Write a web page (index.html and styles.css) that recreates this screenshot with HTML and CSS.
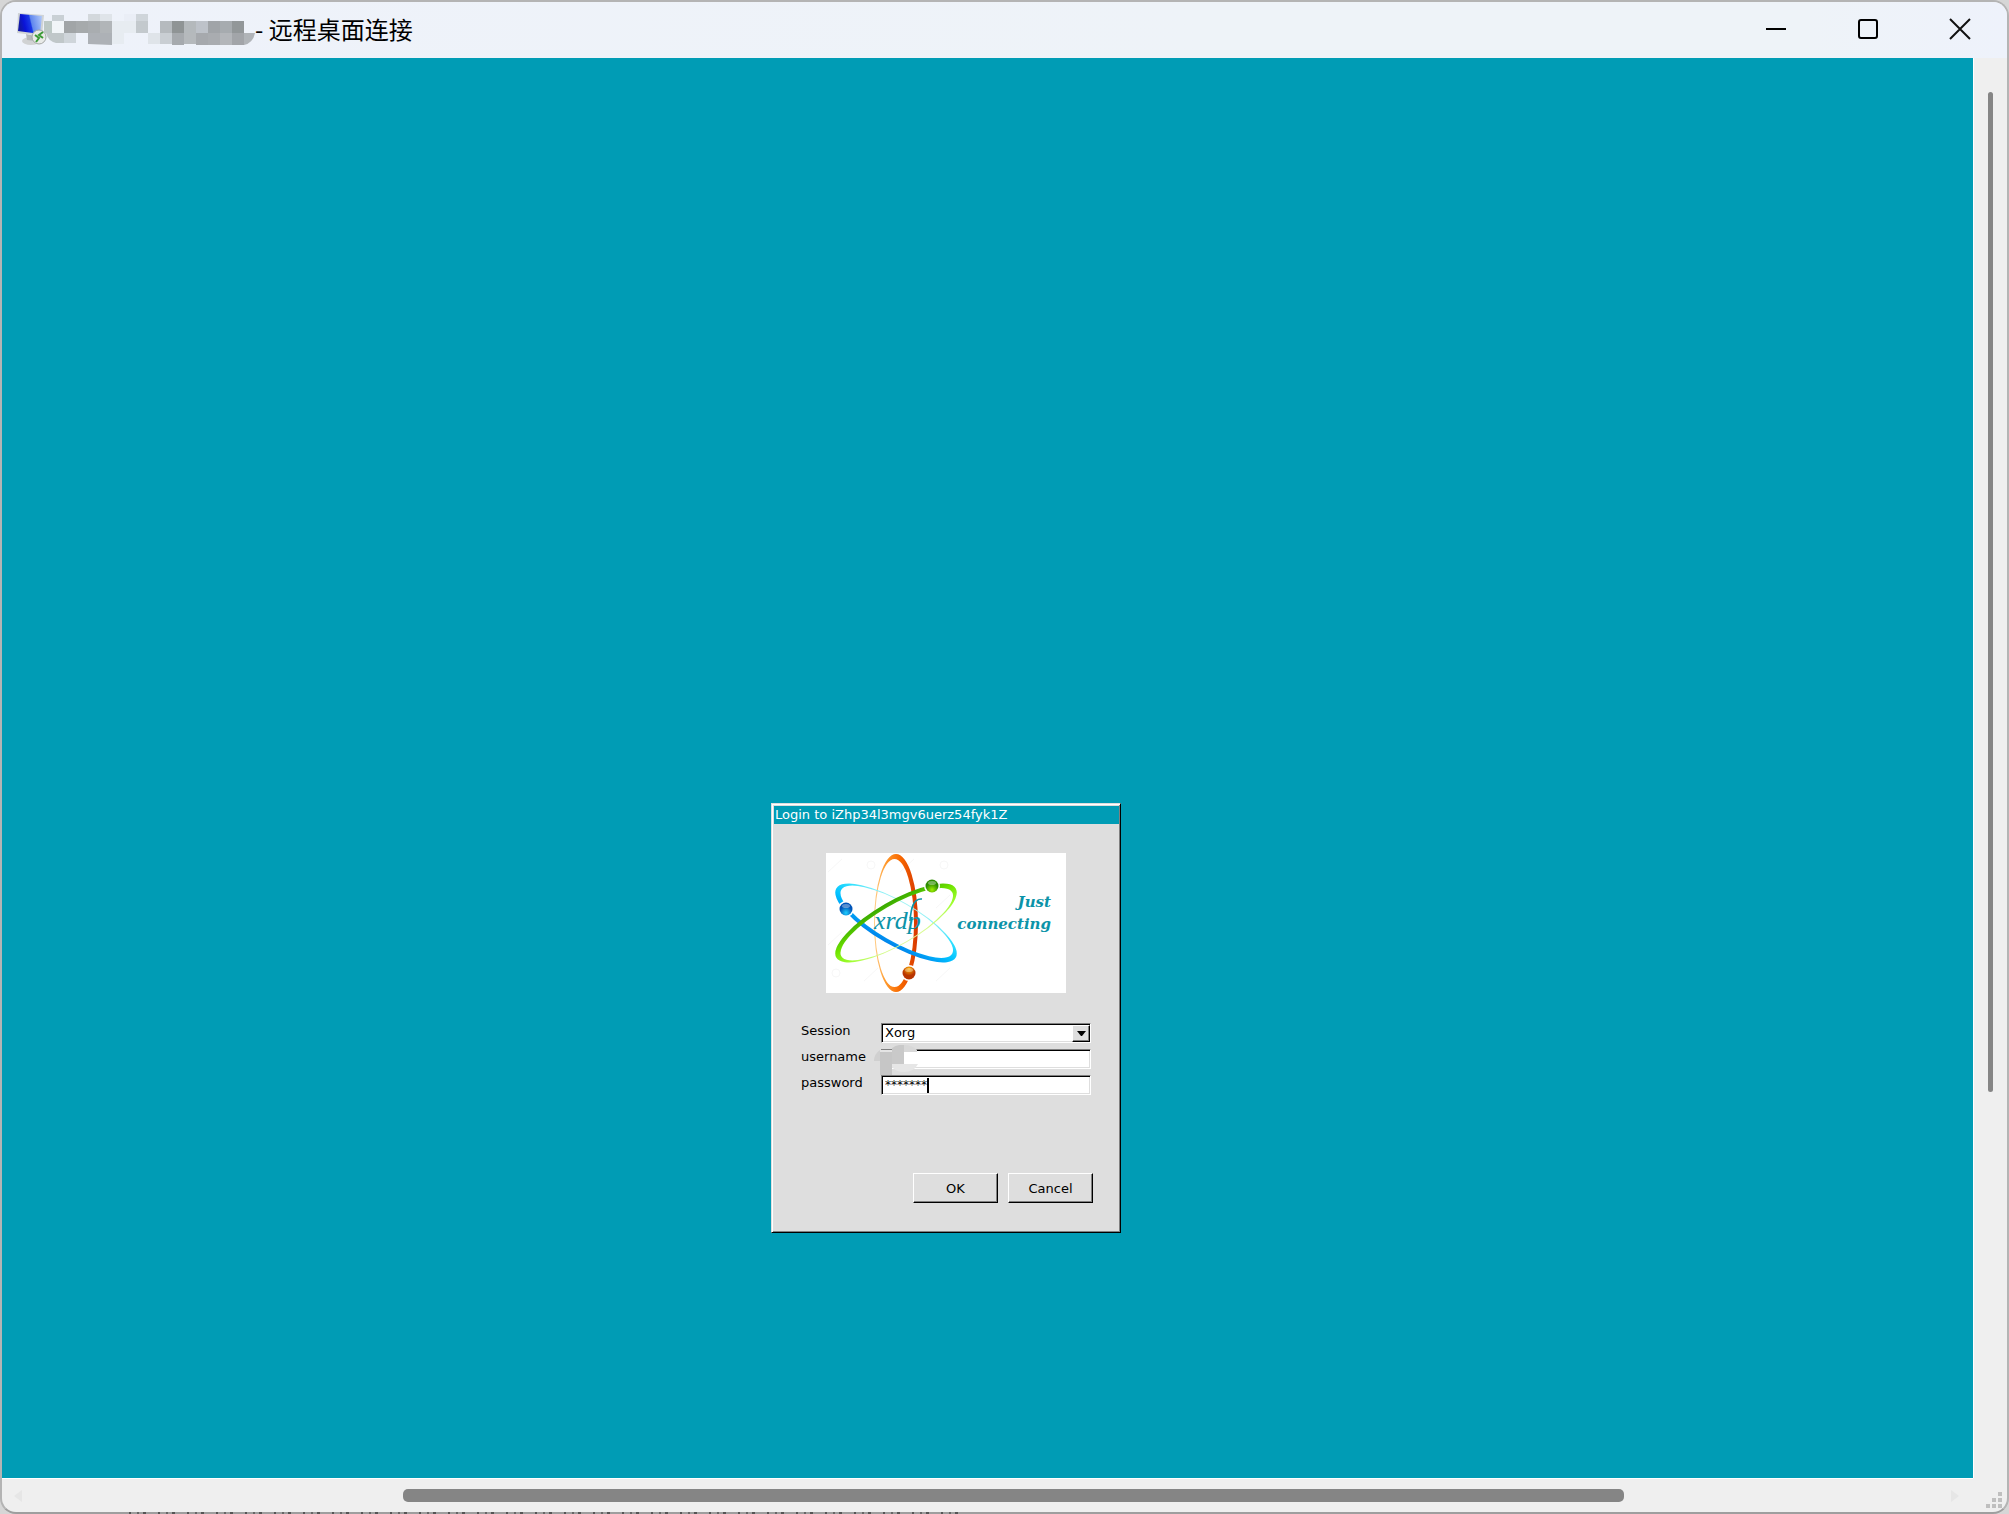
FILE: index.html
```html
<!DOCTYPE html>
<html lang="zh-CN">
<head>
<meta charset="utf-8">
<title>远程桌面连接</title>
<link rel="stylesheet" href="styles.css">
</head>
<body>
<div class="window">
  <header class="titlebar">
    <svg class="app-icon" width="32" height="32" viewBox="0 0 32 32" aria-hidden="true">
      <defs>
        <linearGradient id="screen" x1="0" y1="0.2" x2="1" y2="0">
          <stop offset="0" stop-color="#1018a8"/><stop offset="0.2" stop-color="#0a14d8"/><stop offset="0.45" stop-color="#1a3ae8"/><stop offset="0.5" stop-color="#5f86ee"/><stop offset="1" stop-color="#b4ccfa"/>
        </linearGradient>
      </defs>
      <ellipse cx="15" cy="28" rx="9" ry="4" fill="#d0d2d3"/>
      <path d="M10 21l9 2v5l-8-1z" fill="#b5b8ba"/>
      <path d="M2 0l26 2-2 21L1 20z" fill="#cfd3d6"/>
      <path d="M4 1l22 2-2 18L2 18z" fill="url(#screen)"/>
      <circle cx="23" cy="24" r="7" fill="#e8eae8" stroke="#a5a8a6"/>
      <path d="M19 22l4 3-3 4M27 19l-4 3 4 3" fill="none" stroke="#3a9a35" stroke-width="2"/>
    </svg>
    <svg class="host-mask" width="211" height="32" viewBox="44 12 211 32" aria-hidden="true">
      <path fill="#bcc8c5" d="M44 20h8v12h-8z"/>
      <path fill="#c9d0d5" d="M52 14h12v6H52z"/>
      <path fill="#f1f5f8" d="M52 20h12v12H52z"/>
      <path fill="#c0c7c9" d="M46 32h18v10h-8q-8-2-10-10z"/>
      <path fill="#cfd5da" d="M64 32h12v10H64z"/>
      <path fill="#a1a5a7" d="M64 20h12v12H64z"/>
      <path fill="#a6aaac" d="M76 20h12v12H76z"/>
      <path fill="#a9adb0" d="M88 20h12v12H88z"/>
      <path fill="#b1b5b8" d="M100 20h12v12h-12z"/>
      <path fill="#d3d8dc" d="M88 13h12v7H88z"/>
      <path fill="#dfe4e9" d="M100 13h12v7h-12z"/>
      <path fill="#adb1b6" d="M88 32h24v12l-24-1z"/>
      <path fill="#e7ecf1" d="M112 20h24v12h-24zM112 32h12v11h-12z"/>
      <path fill="#eaeef6" d="M124 13h12v7h-12z"/>
      <path fill="#cfd5da" d="M136 13h12v7h-12z"/>
      <path fill="#c3c9cd" d="M136 20h12v12h-12z"/>
      <path fill="#dfe4e9" d="M148 32h12v11h-12z"/>
      <path fill="#b5babe" d="M160 20h12v12h-12z"/>
      <path fill="#8f9495" d="M172 20h12v12h-12z"/>
      <path fill="#b4b9bc" d="M184 20h12v12h-12z"/>
      <path fill="#bdc2c9" d="M196 20h12v12h-12z"/>
      <path fill="#a0a4a8" d="M208 20h12v12h-12z"/>
      <path fill="#a6abaf" d="M220 20h12v12h-12z"/>
      <path fill="#929799" d="M232 20h12v12h-12z"/>
      <path fill="#c9ced3" d="M160 32h12v11h-12z"/>
      <path fill="#a6aaae" d="M172 32h12v12h-12z"/>
      <path fill="#b5b9bc" d="M184 32h12v11h-12z"/>
      <path fill="#a6a9ad" d="M196 32h12v12h-12z"/>
      <path fill="#a9acb0" d="M208 32h12v12h-12z"/>
      <path fill="#b3b6ba" d="M220 32h12v12h-12z"/>
      <path fill="#a2a5a9" d="M232 32h12v12h-12z"/>
      <path fill="#b0b4b8" d="M244 32h11q-2 10-11 12z"/>
    </svg>
    <h1 class="caption">- 远程桌面连接</h1>
    <div class="caption-buttons">
      <button type="button" aria-label="最小化"><svg width="22" height="22" viewBox="0 0 22 22"><path d="M1 11h20" stroke="#000" stroke-width="2"/></svg></button>
      <button type="button" aria-label="最大化"><svg width="22" height="22" viewBox="0 0 22 22"><rect x="2" y="2" width="18" height="18" rx="2" fill="none" stroke="#000" stroke-width="2"/></svg></button>
      <button type="button" aria-label="关闭"><svg width="22" height="22" viewBox="0 0 22 22"><path d="M1 1l20 20M21 1L1 21" stroke="#111" stroke-width="2"/></svg></button>
    </div>
  </header>

  <main class="desktop">
    <form class="login">
      <h2 class="login-title">Login to iZhp34l3mgv6uerz54fyk1Z</h2>
      <svg class="logo" width="240" height="140" viewBox="0 0 240 140" role="img" aria-label="xrdp">
        <defs>
          <linearGradient id="orange" gradientUnits="userSpaceOnUse" x1="48" y1="0" x2="92" y2="0">
            <stop offset="0" stop-color="#ffd08c"/><stop offset="0.25" stop-color="#ff9c30"/><stop offset="0.6" stop-color="#f86800"/><stop offset="1" stop-color="#d63600"/>
          </linearGradient>
          <linearGradient id="blue" gradientUnits="userSpaceOnUse" x1="48" y1="0" x2="92" y2="0">
            <stop offset="0" stop-color="#a4f4f4"/><stop offset="0.25" stop-color="#30e0ff"/><stop offset="0.6" stop-color="#00c0ff"/><stop offset="1" stop-color="#0084ec"/>
          </linearGradient>
          <linearGradient id="green" gradientUnits="userSpaceOnUse" x1="48" y1="0" x2="92" y2="0">
            <stop offset="0" stop-color="#e0faa0"/><stop offset="0.25" stop-color="#a0ff30"/><stop offset="0.6" stop-color="#70e400"/><stop offset="1" stop-color="#38a800"/>
          </linearGradient>
          <radialGradient id="ball-green" cy="0.8"><stop offset="0" stop-color="#a0f000"/><stop offset="1" stop-color="#2c8c00"/></radialGradient>
          <radialGradient id="ball-blue" cy="0.8"><stop offset="0" stop-color="#20d0ff"/><stop offset="1" stop-color="#0054b8"/></radialGradient>
          <radialGradient id="ball-orange" cy="0.2"><stop offset="0" stop-color="#ffb000"/><stop offset="1" stop-color="#b83400"/></radialGradient>
          <path id="orbit" fill-rule="evenodd" d="M48 70a22 69 0 0 1 44 0a22 69 0 0 1-44 0zM49 70a19.5 64 0 0 0 39 0a19.5 64 0 0 0-39 0z"/>
        </defs>
        <rect width="240" height="140" fill="#fff"/>
        <g fill="none" stroke="#f7f7f7">
          <path d="M2 19l14-13M74 19l14-13M2 92l14-13M38 128l14-13M110 55l14-13M110 128l14-13"/>
          <circle cx="45" cy="12" r="4"/><circle cx="118" cy="12" r="4"/><circle cx="10" cy="120" r="4"/>
        </g>
        <use href="#orbit" fill="url(#orange)"/>
        <use href="#orbit" fill="url(#blue)" transform="rotate(120 70 70)"/>
        <use href="#orbit" fill="url(#green)" transform="rotate(-120 70 70)"/>
        <g fill="#fff"><circle cx="106" cy="33" r="8"/><circle cx="20" cy="56" r="8"/><circle cx="83" cy="120" r="8"/></g>
        <circle cx="106" cy="33" r="6.5" fill="url(#ball-green)"/>
        <circle cx="20" cy="56" r="6.5" fill="url(#ball-blue)"/>
        <circle cx="83" cy="120" r="6.5" fill="url(#ball-orange)"/>
        <g fill="#fff" opacity="0.35"><ellipse cx="106" cy="30" rx="4" ry="2"/><ellipse cx="20" cy="53" rx="4" ry="2"/><ellipse cx="83" cy="117" rx="4" ry="2"/></g>
        <text class="logo-name" x="48" y="76">xrdp</text>
        <path d="M84 68C85 56 87 45 96 46" fill="none" stroke="#0c93a8" stroke-width="1.6"/>
        <text class="logo-tag" x="225" y="54" text-anchor="end">Just</text>
        <text class="logo-tag" x="225" y="76" text-anchor="end">connecting</text>
      </svg>
      <div class="fields">
        <label for="session">Session</label>
        <div class="field">
          <select id="session"><option>Xorg</option></select>
          <span class="drop"><svg width="9" height="5" viewBox="0 0 9 5"><path d="M0 0h9L5 5H4z"/></svg></span>
        </div>
        <label for="username">username</label>
        <div class="field">
          <input id="username" type="text">
          <svg class="user-mask" width="44" height="32" viewBox="0 0 44 32" aria-hidden="true">
            <path fill="#d0d0d0" d="M6 5v11H0Q0 9 6 5z"/>
            <path fill="#fff" d="M30 7h14v13H30z"/>
            <path fill="#c6c6c6" d="M6 7h12v24q-6 1-12-1z"/>
            <path fill="#e4e4e4" d="M6 5h12v2H6z"/>
            <path fill="#c9c9c9" d="M18 3q6-4 12-3v19H18z"/>
            <path fill="#d8d8d8" d="M30 0q8 0 13 5v2H30z"/>
            <path fill="#e6e6e6" d="M18 19h26q-4 8-14 8-8 0-12-5z"/>
          </svg>
        </div>
        <label for="password">password</label>
        <div class="field">
          <input id="password" type="text" value="*******" autocomplete="off">
          <span class="caret"></span>
        </div>
      </div>
      <div class="actions">
        <button type="button">OK</button>
        <button type="button">Cancel</button>
      </div>
    </form>
  </main>

  <div class="scroll-y"><div class="thumb-y"></div></div>
  <div class="scroll-x">
    <svg width="8" height="12" viewBox="0 0 8 12"><path d="M8 0v12L0 6z" fill="#e6e6e6"/></svg>
    <div class="track-x"><div class="thumb-x"></div></div>
    <svg width="8" height="12" viewBox="0 0 8 12"><path d="M0 0v12l8-6z" fill="#e6e6e6"/></svg>
  </div>
  <div class="grip">
    <svg width="16" height="16" viewBox="0 0 16 16"><path d="M12 0h4v4h-4zM6 6h4v4H6zM12 6h4v4h-4zM0 12h4v4H0zM6 12h4v4H6zM12 12h4v4h-4z" fill="#bfbfbf"/></svg>
  </div>
  <div class="behind"></div>
</div>
</body>
</html>
```
FILE: styles.css
```css
* { box-sizing: border-box; }

body {
  margin: 0;
  background: #d6d6d6;
  font-family: "DejaVu Sans", Verdana, sans-serif;
  font-size: 13px;
  color: #000;
}

.window {
  position: relative;
  display: grid;
  grid-template: 56px 1fr 34px / 1fr 34px;
  min-height: 100vh;
  border: 2px solid #b4b4b4;
  border-bottom-color: #9e9e9e;
  border-radius: 16px;
  background: #efefef;
}

.titlebar {
  grid-column: 1 / 3;
  display: flex;
  align-items: center;
  padding: 0 1px 2px 14px;
  border-radius: 14px 14px 0 0;
  background: linear-gradient(90deg, #eef2fa, #eef3f8 60%, #eef3f8 90%, #eef2fb);
}

.host-mask { margin-left: -4px; }

.caption {
  margin: 0;
  font: 400 24px/32px "Noto Sans CJK SC", sans-serif;
}

.caption-buttons {
  display: flex;
  align-self: stretch;
  margin-left: auto;
}

.caption-buttons button {
  display: grid;
  place-items: center;
  width: 92px;
  padding: 0;
  border: 0;
  background: none;
}

.desktop {
  position: relative;
  background: #009cb5;
}

.login {
  position: absolute;
  left: 769px;
  top: 745px;
  width: 350px;
  height: 430px;
  padding: 2px 1px 1px 2px;
  border: 1px solid #dedede;
  border-right-color: #000;
  border-bottom-color: #000;
  box-shadow: inset 1px 1px #fff, inset -1px -1px #808080;
  background: #dedede;
}

.login-title {
  margin: 0;
  padding-left: 1px;
  background: #009cb5;
  color: #fff;
  font-size: 13px;
  font-weight: 400;
  line-height: 18px;
}

.logo {
  display: block;
  margin: 29px 0 30px 52px;
}

.logo-name {
  font: italic 26px "Liberation Serif", serif;
  fill: #0c93a8;
}

.logo-tag {
  font: italic 700 15px "DejaVu Serif", serif;
  fill: #0c93a8;
}

.fields {
  display: grid;
  grid-template-columns: 80px 210px;
  row-gap: 6px;
  padding-left: 27px;
  line-height: 16px;
}

.field {
  position: relative;
  height: 20px;
}

.field input,
.field select {
  display: block;
  width: 100%;
  height: 20px;
  margin: 0;
  padding: 0 0 0 3px;
  border: 1px solid #808080;
  border-right-color: #fff;
  border-bottom-color: #fff;
  border-radius: 0;
  box-shadow: inset 1px 1px #000, inset -1px -1px #dedede;
  outline: 0;
  appearance: none;
  background: #fff;
  color: #000;
  font: inherit;
}

#password { font-size: 12px; }

.drop {
  position: absolute;
  top: 2px;
  right: 1px;
  display: grid;
  place-items: center;
  width: 18px;
  height: 17px;
  border: 1px solid #fff;
  border-right-color: #000;
  border-bottom-color: #000;
  box-shadow: inset -1px -1px #808080;
  background: #dedede;
  pointer-events: none;
}

.user-mask {
  position: absolute;
  left: -7px;
  top: -4px;
}

.caret {
  position: absolute;
  left: 46px;
  top: 3px;
  width: 2px;
  height: 15px;
  background: #000;
}

.actions {
  display: flex;
  justify-content: flex-end;
  gap: 10px;
  margin-top: 78px;
  padding-right: 26px;
}

.actions button {
  width: 85px;
  height: 30px;
  padding: 0;
  border: 1px solid #fff;
  border-right-color: #000;
  border-bottom-color: #000;
  box-shadow: inset -1px -1px #808080;
  background: #dedede;
  color: #000;
  font: inherit;
}

.scroll-y {
  padding: 34px 14px 0;
  border-left: 1px solid #fff;
}

.thumb-y {
  width: 5px;
  height: 1000px;
  border-radius: 3px;
  background: #858585;
}

.scroll-x {
  display: flex;
  align-items: center;
  padding: 0 14px 0 12px;
  border-top: 1px solid #fff;
}

.track-x {
  flex: 1;
  padding: 0 327px 0 381px;
}

.thumb-x {
  height: 13px;
  border-radius: 5px;
  background: #858585;
}

.grip {
  display: flex;
  align-items: end;
  justify-content: end;
  padding: 0 5px 4px 0;
}

.behind {
  position: absolute;
  left: 127px;
  bottom: -2px;
  width: 836px;
  height: 2px;
  background: repeating-linear-gradient(90deg, #555 0 2px, transparent 2px 8px, #666 8px 10px, transparent 10px 14px, #555 14px 17px, transparent 17px 29px);
}
```
